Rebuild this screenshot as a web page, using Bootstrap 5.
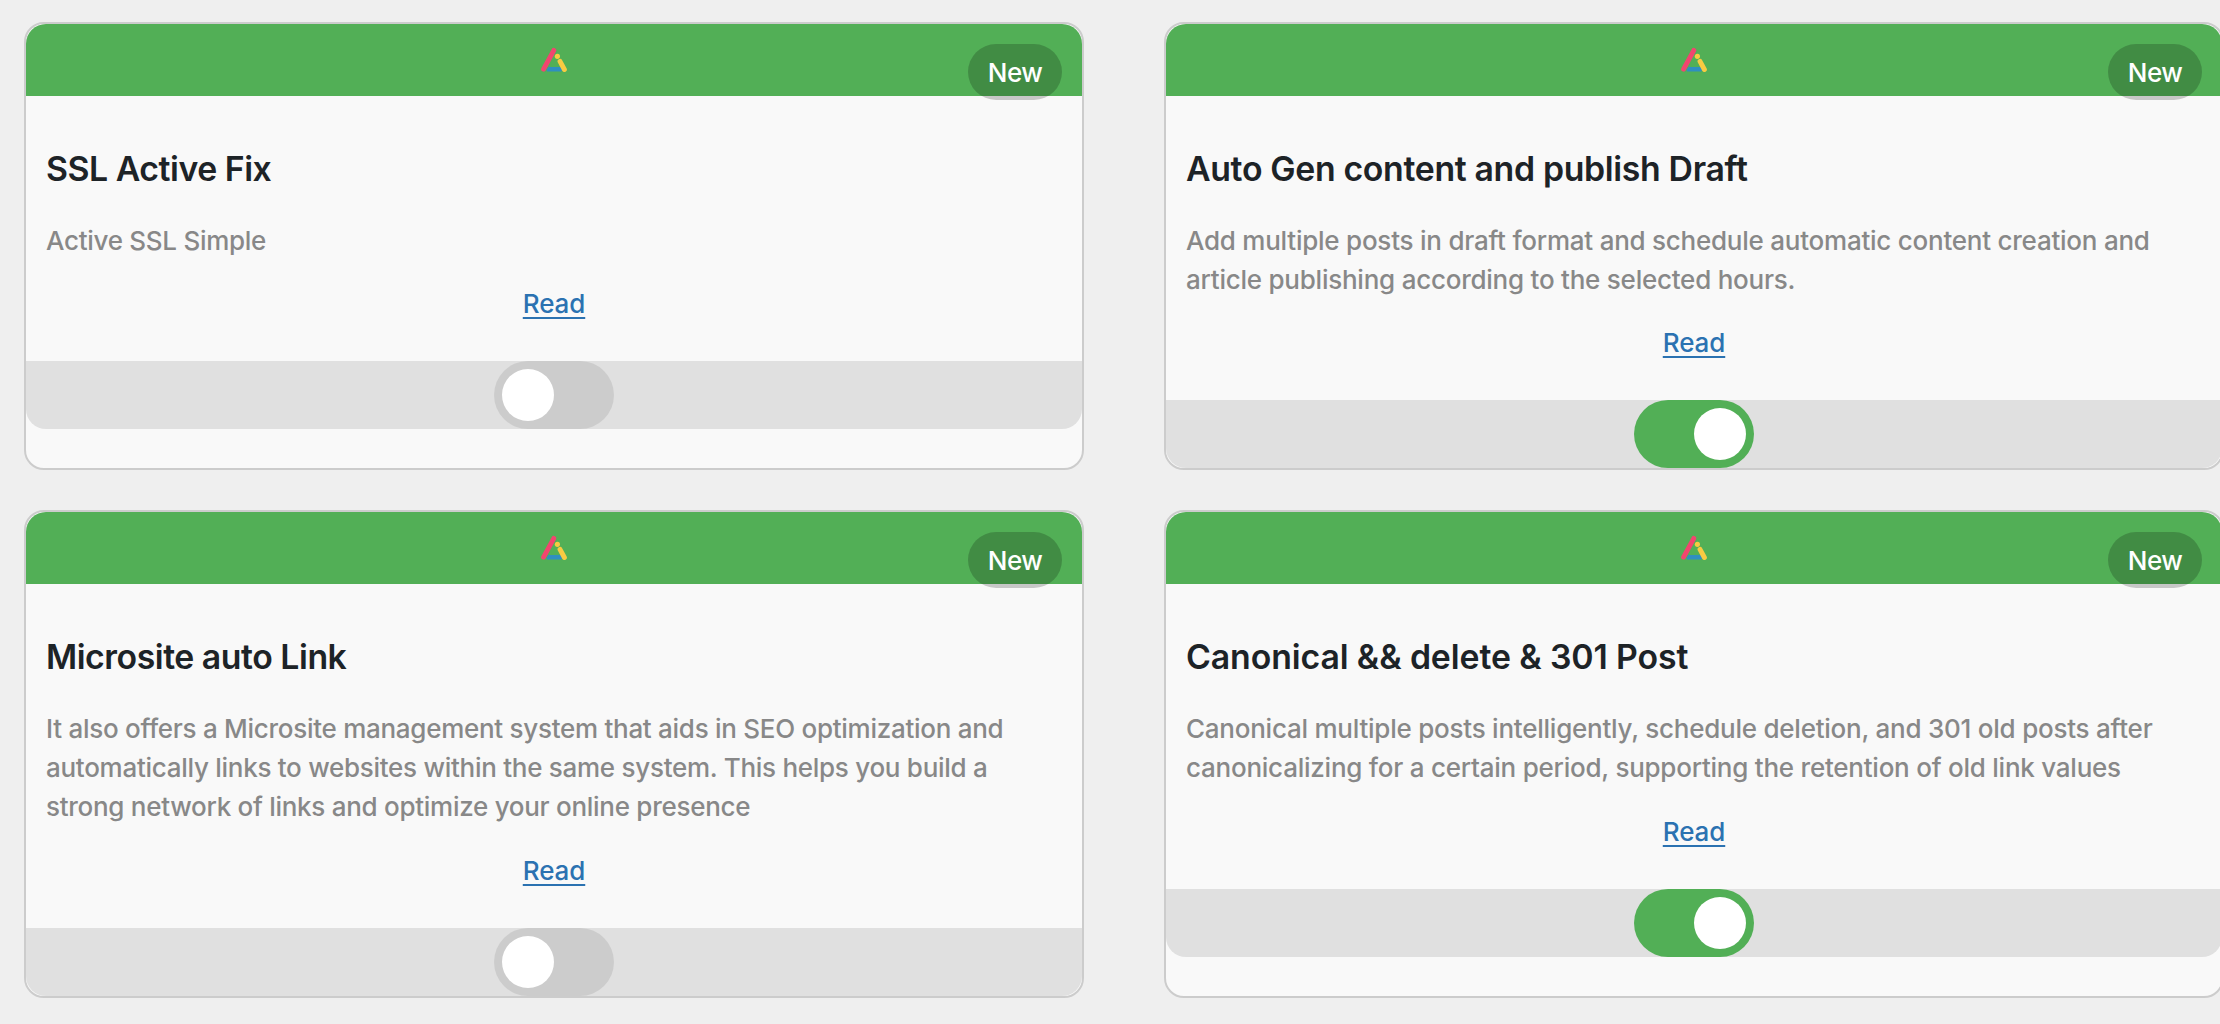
<!DOCTYPE html>
<html lang="en">
<head>
<meta charset="utf-8">
<meta name="viewport" content="width=device-width, initial-scale=1">
<title>Modules</title>
<link href="https://cdn.jsdelivr.net/npm/bootstrap@5.3.0/dist/css/bootstrap.min.css" rel="stylesheet">
<style>
  body { background: #efefef; font-family: Inter, "Liberation Sans", sans-serif; font-size: 26px; line-height: 1.4; overflow: hidden; }
  .module-grid { width: 2224px; padding: 22px 0 26px 24px; grid-template-columns: 1060px 1060px; grid-template-rows: 448px 488px; gap: 40.4px 80px; }
  .module { background: #f9f9f9; border: 2px solid #ccc; border-radius: 20px; }
  .module-head { height: 72px; background: #52af56; border-radius: 20px 20px 0 0; }
  .module-tag { top: 20px; right: 20px; width: 94px; height: 56px; padding-top: 2px; background: rgba(0, 0, 0, .2); color: #fff; letter-spacing: -.5px; font-weight: 500; }
  .module-body { padding: 20px 20px 38.5px; }
  .module-title { margin: 35px 0 33.6px; font-size: 33.8px; line-height: 36.4px; font-weight: 640; color: #1d2327; letter-spacing: -.33px; }
  .module-title.tight { letter-spacing: -.46px; }
  .module-title.wide { letter-spacing: -.1px; }
  .module-text { margin-bottom: 26.3px; line-height: 39px; color: #888; font-weight: 450; letter-spacing: -.24px; }
  .module-text.tight { letter-spacing: -.28px; }
  .module-link { line-height: 36.4px; font-weight: 450; letter-spacing: -.1px; }
  .module-link a { color: #2b72b1; text-decoration-thickness: 2px; text-underline-offset: 4px; text-decoration-skip-ink: none; }
  .module-foot { height: 68px; background: #e0e0e0; border-radius: 0 0 20px 20px; }
  .toggle { width: 120px; height: 68px; padding: 8px; background: #ccc; }
  .toggle.on { background: #52af56; justify-content: flex-end; }
  .toggle i { width: 52px; height: 52px; background: #fff; }
</style>
</head>
<body>
<svg class="d-none" xmlns="http://www.w3.org/2000/svg">
  <symbol id="logo" viewBox="0 0 28 28">
    <path d="M8.4 21h12.2l1.6 2.4-1 2.1H7.2l-.6-1.6z" fill="#2f8fc0"/>
    <path d="M3.6 23.2L13.8 4.3" stroke="#f2456f" stroke-width="4.9" stroke-linecap="round"/>
    <path d="M20 15.4l4.4 8.1" stroke="#f8cb42" stroke-width="4.9" stroke-linecap="round"/>
    <circle cx="17.4" cy="10.3" r="2.6" fill="#f8cb42"/>
  </symbol>
</svg>
<main class="module-grid d-grid">
  <article class="module position-relative">
    <header class="module-head d-flex align-items-center justify-content-center"><svg width="28" height="28"><use href="#logo"/></svg></header>
    <span class="module-tag position-absolute rounded-pill d-flex align-items-center justify-content-center">New</span>
    <div class="module-body">
      <h3 class="module-title tight">SSL Active Fix</h3>
      <p class="module-text tight">Active SSL Simple</p>
      <div class="module-link text-center"><a href="#">Read</a></div>
    </div>
    <footer class="module-foot d-flex justify-content-center"><span class="toggle rounded-pill d-flex"><i class="rounded-circle"></i></span></footer>
  </article>
  <article class="module position-relative">
    <header class="module-head d-flex align-items-center justify-content-center"><svg width="28" height="28"><use href="#logo"/></svg></header>
    <span class="module-tag position-absolute rounded-pill d-flex align-items-center justify-content-center">New</span>
    <div class="module-body">
      <h3 class="module-title">Auto Gen content and publish Draft</h3>
      <p class="module-text">Add multiple posts in draft format and schedule automatic content creation and article publishing according to the selected hours.</p>
      <div class="module-link text-center"><a href="#">Read</a></div>
    </div>
    <footer class="module-foot d-flex justify-content-center"><span class="toggle on rounded-pill d-flex"><i class="rounded-circle"></i></span></footer>
  </article>
  <article class="module position-relative">
    <header class="module-head d-flex align-items-center justify-content-center"><svg width="28" height="28"><use href="#logo"/></svg></header>
    <span class="module-tag position-absolute rounded-pill d-flex align-items-center justify-content-center">New</span>
    <div class="module-body">
      <h3 class="module-title tight">Microsite auto Link</h3>
      <p class="module-text tight">It also offers a Microsite management system that aids in SEO optimization and automatically links to websites within the same system. This helps you build a strong network of links and optimize your online presence</p>
      <div class="module-link text-center"><a href="#">Read</a></div>
    </div>
    <footer class="module-foot d-flex justify-content-center"><span class="toggle rounded-pill d-flex"><i class="rounded-circle"></i></span></footer>
  </article>
  <article class="module position-relative">
    <header class="module-head d-flex align-items-center justify-content-center"><svg width="28" height="28"><use href="#logo"/></svg></header>
    <span class="module-tag position-absolute rounded-pill d-flex align-items-center justify-content-center">New</span>
    <div class="module-body">
      <h3 class="module-title wide">Canonical &amp;&amp; delete &amp; 301 Post</h3>
      <p class="module-text">Canonical multiple posts intelligently, schedule deletion, and 301 old posts after canonicalizing for a certain period, supporting the retention of old link values</p>
      <div class="module-link text-center"><a href="#">Read</a></div>
    </div>
    <footer class="module-foot d-flex justify-content-center"><span class="toggle on rounded-pill d-flex"><i class="rounded-circle"></i></span></footer>
  </article>
</main>
<script src="https://cdn.jsdelivr.net/npm/bootstrap@5.3.0/dist/js/bootstrap.bundle.min.js"></script>
</body>
</html>
